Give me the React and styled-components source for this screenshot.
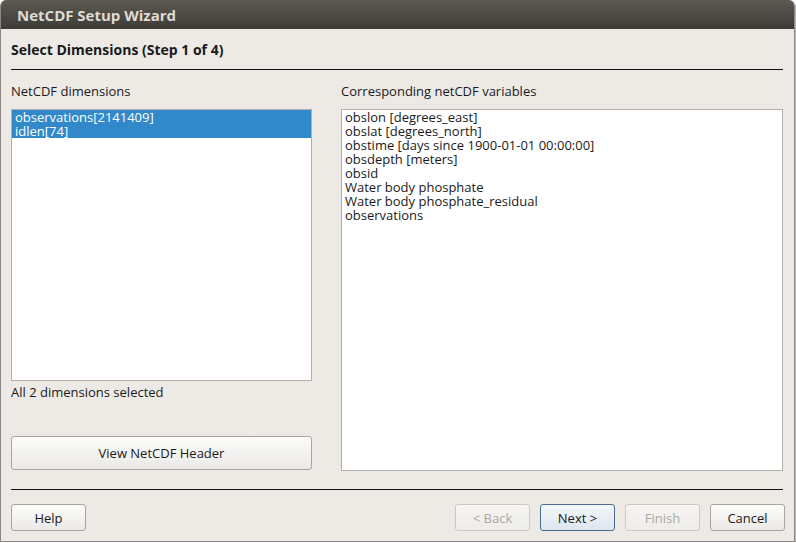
import styled, { createGlobalStyle } from 'styled-components';

const Global = createGlobalStyle`
  html, body {
    margin: 0;
    padding: 0;
    background: #ffffff;
  }
  body {
    font-family: "Open Sans", "DejaVu Sans", sans-serif;
    font-size: 13px;
    color: #1a1a1a;
  }
`

const Window = styled.div`
  width: 795px;
  height: 542px;
  box-sizing: border-box;
  display: flex;
  flex-direction: column;
  background: #edeae6;
  border: 1px solid #8a8884;
  border-top: none;
  border-radius: 6px 6px 0 0;
  overflow: hidden;
  box-shadow: 1px 1px 0 #b8b6b2;
`

const TitleBar = styled.div`
  height: 29px;
  flex: none;
  display: flex;
  align-items: center;
  padding-left: 16px;
  background: linear-gradient(#5c5953, #3e3c37);
  color: #dfdbd2;
  font-weight: bold;
  font-size: 15px;
`

const Body = styled.div`
  flex: 1;
  display: flex;
  flex-direction: column;
  padding: 0 11px 0 10px;
`

const Heading = styled.div`
  font-weight: bold;
  font-size: 14px;
  height: 40px;
  display: flex;
  align-items: center;
`

const Rule = styled.div`
  height: 1px;
  flex: none;
  background: #111;
`

const Columns = styled.div`
  display: grid;
  grid-template-columns: 301px 1fr;
  align-items: start;
  column-gap: 29px;
  padding-top: 12px;
  height: 419px;
  box-sizing: border-box;
  flex: none;
`

const Column = styled.div`
  display: flex;
  flex-direction: column;
`

const Label = styled.div`
  height: 18px;
  line-height: 18px;
  margin-bottom: 9px;
`

const ListBox = styled.div`
  background: #fff;
  border: 1px solid #b3b0ab;
  height: ${p => p.$h}px;
  box-sizing: border-box;
  line-height: 14px;
`

const Item = styled.div`
  padding: 0 3px;
  height: 14px;
  white-space: pre;
  background: ${p => (p.$selected ? '#3189c9' : 'transparent')};
  color: ${p => (p.$selected ? '#ffffff' : '#1a1a1a')};
`

const Status = styled.div`
  height: 22px;
  line-height: 22px;
  margin-bottom: 33px;
`

const Button = styled.button`
  font-family: inherit;
  font-size: 13px;
  color: ${p => (p.$disabled ? '#aaa8a4' : '#1a1a1a')};
  border: 1px solid ${p => (p.$focus ? '#4a6d91' : p.$disabled ? '#cbc9c5' : '#a7a5a1')};
  background: ${p => (p.$focus ? 'linear-gradient(#f4f7fa, #dde5ee)' : p.$disabled ? 'linear-gradient(#f6f5f3, #eeece9)' : 'linear-gradient(#fcfcfb, #ebe9e6)')};
  border-radius: 3px;
  box-sizing: border-box;
  height: ${p => p.$h || 27}px;
  width: ${p => p.$w}px;
  padding: 0;
`

const Footer = styled.div`
  display: flex;
  align-items: center;
  gap: 10px;
  padding-top: 14px;
  margin-right: -2px;
`

const Spacer = styled.div`
  flex: 1;
`

const variables = [
  'obslon [degrees_east]',
  'obslat [degrees_north]',
  'obstime [days since 1900-01-01 00:00:00]',
  'obsdepth [meters]',
  'obsid',
  'Water body phosphate',
  'Water body phosphate_residual',
  'observations',
];

const App = () => (
  <>
    <Global />
    <Window>
      <TitleBar>NetCDF Setup Wizard</TitleBar>
      <Body>
        <Heading>Select Dimensions (Step 1 of 4)</Heading>
        <Rule />
        <Columns>
          <Column>
            <Label>NetCDF dimensions</Label>
            <ListBox $h={272}>
              <Item $selected>observations[2141409]</Item>
              <Item $selected>idlen[74]</Item>
            </ListBox>
            <Status>All 2 dimensions selected</Status>
            <Button $w={301} $h={34}>View NetCDF Header</Button>
          </Column>
          <Column>
            <Label>Corresponding netCDF variables</Label>
            <ListBox $h={362}>
              {variables.map(v => (
                <Item key={v}>{v}</Item>
              ))}
            </ListBox>
          </Column>
        </Columns>
        <Rule />
        <Footer>
          <Button $w={75}>Help</Button>
          <Spacer />
          <Button $w={75} $disabled>&lt; Back</Button>
          <Button $w={75} $focus>Next &gt;</Button>
          <Button $w={75} $disabled>Finish</Button>
          <Button $w={75}>Cancel</Button>
        </Footer>
      </Body>
    </Window>
  </>
);

export default App;
